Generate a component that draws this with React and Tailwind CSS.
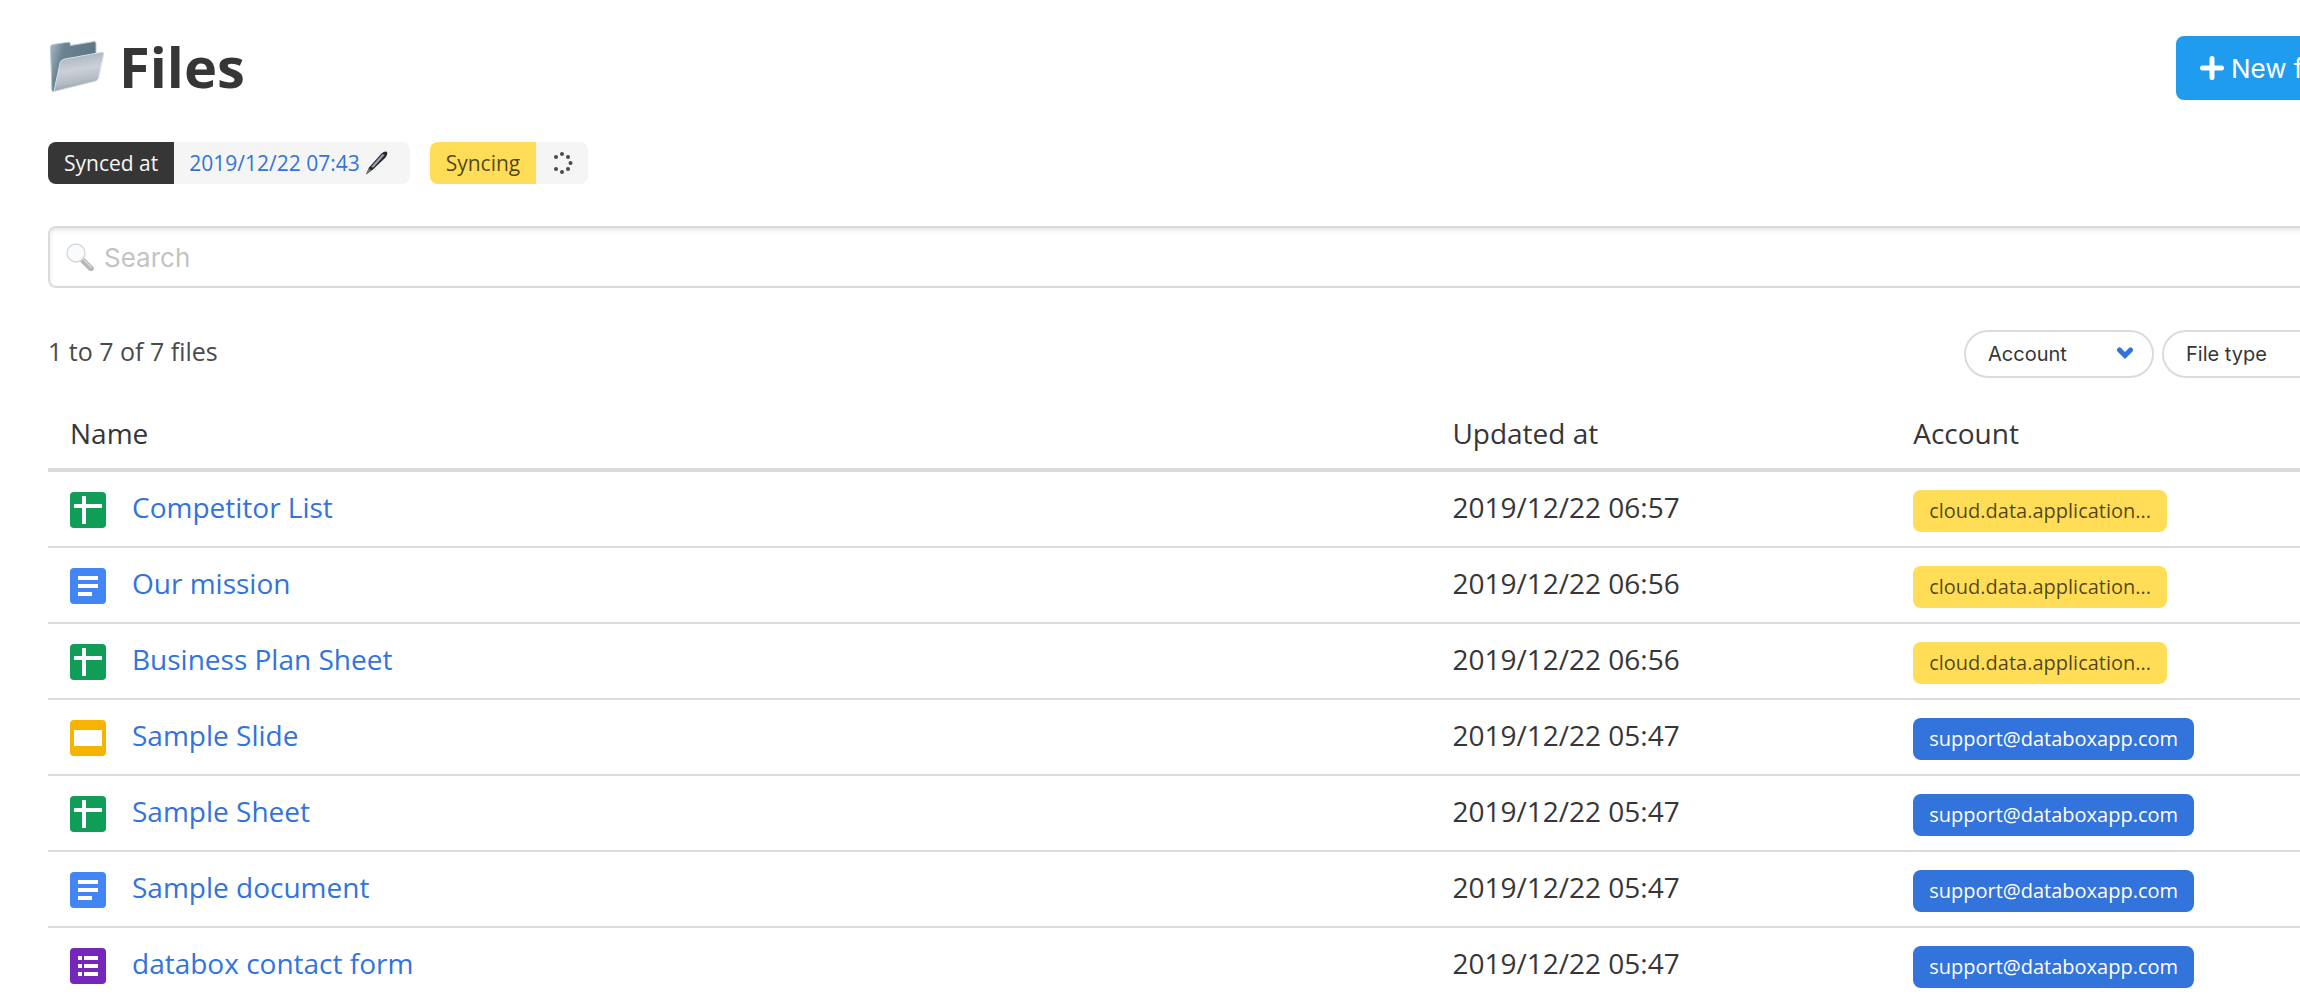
import { useState } from "react";

const files = [
  { name: "Competitor List", type: "sheet", updatedAt: "2019/12/22 06:57", account: "cloud.data.application..." },
  { name: "Our mission", type: "doc", updatedAt: "2019/12/22 06:56", account: "cloud.data.application..." },
  { name: "Business Plan Sheet", type: "sheet", updatedAt: "2019/12/22 06:56", account: "cloud.data.application..." },
  { name: "Sample Slide", type: "slide", updatedAt: "2019/12/22 05:47", account: "support@databoxapp.com" },
  { name: "Sample Sheet", type: "sheet", updatedAt: "2019/12/22 05:47", account: "support@databoxapp.com" },
  { name: "Sample document", type: "doc", updatedAt: "2019/12/22 05:47", account: "support@databoxapp.com" },
  { name: "databox contact form", type: "form", updatedAt: "2019/12/22 05:47", account: "support@databoxapp.com" },
];

const iconColors = {
  sheet: "#0f9d58",
  doc: "#4285f4",
  slide: "#f4b400",
  form: "#7627bb",
};

const iconPaths = {
  sheet: "M12 4h4v8h16v4H16v16h-4V16H4v-4h8z",
  doc: "M8 8h20v4H8zM8 16h20v4H8zM8 24h14v4H8z",
  slide: "M4 10h28v16H4z",
  form: "M8 8h4v4H8zM14 8h14v4H14zM8 16h4v4H8zM14 16h14v4H14zM8 24h4v4H8zM14 24h14v4H14z",
};

function FileIcon({ type }) {
  return (
    <svg viewBox="0 0 36 36" className="mt-1.5 size-9 shrink-0" aria-hidden="true">
      <rect width="36" height="36" rx="4" fill={iconColors[type]} />
      <path d={iconPaths[type]} fill="#fff" />
    </svg>
  );
}

function FolderIcon() {
  return (
    <svg viewBox="0 0 56 56" className="size-14 shrink-0" aria-hidden="true">
      <defs>
        <linearGradient id="folder-back" x1="0" y1="0" x2="1" y2="0.3">
          <stop offset="0" stopColor="#a9bcc7" />
          <stop offset="0.3" stopColor="#6c8492" />
          <stop offset="1" stopColor="#5d7482" />
        </linearGradient>
        <linearGradient id="folder-front" x1="0.3" y1="0" x2="0.5" y2="1">
          <stop offset="0" stopColor="#a3adb8" />
          <stop offset="0.45" stopColor="#cbd1d9" />
          <stop offset="0.75" stopColor="#b3bbc4" />
          <stop offset="1" stopColor="#8a96a2" />
        </linearGradient>
      </defs>
      <path
        d="M2.500 9q0-2 2-2.400L20 4.200q2-.2 2.200 1.300L22.500 7.500 46 3.600q2-.2 2 1.700V34L6 53.500q-2 .3-2.200-1.500z"
        fill="url(#folder-back)"
        stroke="#b9cad3"
        strokeWidth="1"
      />
      <path
        d="M6 53.500 12 25q.8-3.200 4-3.800L54 14.200q2.200-.3 1.700 1.800L50.500 40q-.6 2.600-3.200 3.200z"
        fill="url(#folder-front)"
        stroke="#d8e0e6"
        strokeWidth="1"
      />
    </svg>
  );
}

function PenIcon() {
  return (
    <svg viewBox="0 0 24 24" className="size-6" aria-hidden="true">
      <path d="M1 23.500 4 16.500 16.500 2.500Q19.500 0 21.800 .8 23.200 2.600 20.500 6.500L8 18.500z" fill="#26282b" />
      <path d="M6 16 17.500 3 19.500 4 8.500 16.500z" fill="#98a4b0" />
      <path d="M1 23.500 3.800 17.300 6.600 19.400z" fill="#707479" />
    </svg>
  );
}

function SpinnerIcon() {
  return (
    <svg viewBox="0 0 22 22" className="size-[22px] fill-[#4a4a4a]" aria-hidden="true">
      <circle cx="11" cy="2" r="2" />
      <circle cx="17" cy="5" r="2" />
      <circle cx="19.500" cy="11" r="2" />
      <circle cx="17" cy="17" r="2" />
      <circle cx="11" cy="20" r="2" />
      <circle cx="5" cy="17" r="2" />
      <circle cx="5" cy="5" r="2" />
    </svg>
  );
}

function SearchIcon() {
  return (
    <svg viewBox="0 0 28 28" className="size-7 shrink-0" aria-hidden="true">
      <path d="m17 17.500 8 8" stroke="#b4b6b8" strokeWidth="5.500" strokeLinecap="round" />
      <path d="m17.500 16.500 8 8" stroke="#d6d8da" strokeWidth="1.500" />
      <circle cx="10" cy="10" r="9" fill="#fafbfc" stroke="#d3d8dc" strokeWidth="1.400" />
    </svg>
  );
}

function Filter({ label, options }) {
  const [value, setValue] = useState("");

  return (
    <div className="relative">
      <select
        aria-label={label}
        value={value}
        onChange={(e) => setValue(e.target.value)}
        className="h-12 w-[190px] appearance-none rounded-full border-2 border-[#dbdbdb] bg-white pr-12 pl-[22px] font-[Inter,sans-serif] text-xl text-[#363636]"
      >
        <option value="">{label}</option>
        {options.map((option) => (
          <option key={option}>{option}</option>
        ))}
      </select>
      <svg viewBox="0 0 18 14" className="pointer-events-none absolute top-4 right-5 h-3.5 w-[18px]" aria-hidden="true">
        <path d="m3.500 4 5.500 5.500L14.500 4" fill="none" stroke="#3273dc" strokeWidth="5" strokeLinecap="round" />
      </svg>
    </div>
  );
}

function App() {
  const [query, setQuery] = useState("");
  const rows = files.filter((file) => file.name.toLowerCase().includes(query.toLowerCase()));

  return (
    <div className="min-h-screen overflow-x-clip bg-white font-['Open_Sans',sans-serif] text-[#363636]">
      {/* the page keeps a wider canvas than the window, the rest is cut at the right */}
      <main className="w-[calc(100%+100px)] px-12 pt-9">
        <header className="flex items-start justify-between">
          <h1 className="flex items-center gap-[15px] text-[56px] leading-[60px] font-bold">
            <FolderIcon />
            Files
          </h1>
          <button className="flex h-16 w-44 items-center gap-[7px] rounded-lg bg-[#209cee] pl-6 font-[Inter,sans-serif] text-[26px] whitespace-nowrap text-white">
            <svg viewBox="0 0 24 24" className="size-6 shrink-0" aria-hidden="true">
              <path d="M12 2.500v19M2.500 12h19" stroke="#fff" strokeWidth="5" strokeLinecap="round" />
            </svg>
            New file
          </button>
        </header>

        <div className="mt-[42px] flex gap-5 text-[21px] leading-[42px]">
          <div className="flex overflow-hidden rounded-lg bg-[#f5f5f5]">
            <span className="bg-[#363636] px-4 text-[#f5f5f5]">Synced at</span>
            <a href="#sync" className="flex items-center gap-[5px] pr-[21px] pl-[15px] text-[#3273dc]">
              2019/12/22 07:43
              <PenIcon />
            </a>
          </div>
          <div className="flex overflow-hidden rounded-lg bg-[#f5f5f5]">
            <span className="bg-[#ffdd57] px-4 text-black/70">Syncing</span>
            <span className="flex items-center px-[15px]">
              <SpinnerIcon />
            </span>
          </div>
        </div>

        <label className="mt-[42px] flex h-[62px] items-center gap-2.5 rounded-lg border-2 border-[#dbdbdb] px-4 shadow-[inset_0_2px_4px_rgba(10,10,10,0.1)]">
          <SearchIcon />
          <input
            type="text"
            aria-label="Search"
            placeholder="Search"
            value={query}
            onChange={(e) => setQuery(e.target.value)}
            className="w-full bg-transparent font-[Inter,sans-serif] text-[26px] outline-none placeholder:text-[#c3c3c3]"
          />
        </label>

        <div className="mt-[42px] flex items-start justify-between">
          <p className="text-[25px] leading-[42px] text-[#4a4a4a]">1 to 7 of 7 files</p>
          <div className="flex gap-2">
            <Filter label="Account" options={["cloud.data.application", "support@databoxapp.com"]} />
            <Filter label="File type" options={["Sheet", "Document", "Slide", "Form"]} />
          </div>
        </div>

        <table className="mt-[26px] w-full table-fixed border-separate border-spacing-0 text-left text-[28px] leading-[42px]">
          <thead>
            <tr className="*:border-b-4 *:border-[#dbdbdb] *:px-[22px] *:pt-2 *:pb-3.5 *:font-normal">
              <th className="w-[60%]">Name</th>
              <th className="w-[20%]">Updated at</th>
              <th className="w-[20%]">Account</th>
            </tr>
          </thead>
          <tbody>
            {rows.map((file) => (
              <tr
                key={file.name}
                className="h-19 align-top *:border-b-2 *:border-[#dbdbdb] *:px-[22px] last:*:border-b-0"
              >
                <td className="pt-3.5">
                  <div className="flex items-start gap-6.5">
                    <FileIcon type={file.type} />
                    <a href="#file" className="text-[#3273dc]">{file.name}</a>
                  </div>
                </td>
                <td className="pt-3.5">{file.updatedAt}</td>
                <td className="pt-[18px]">
                  <span
                    className={
                      file.account.startsWith("cloud")
                        ? "block w-fit rounded-lg bg-[#ffdd57] px-4 text-xl leading-[42px] text-black/70"
                        : "block w-fit rounded-lg bg-[#3273dc] px-4 text-xl leading-[42px] text-white"
                    }
                  >
                    {file.account}
                  </span>
                </td>
              </tr>
            ))}
          </tbody>
        </table>
      </main>
    </div>
  );
}

export default App;
